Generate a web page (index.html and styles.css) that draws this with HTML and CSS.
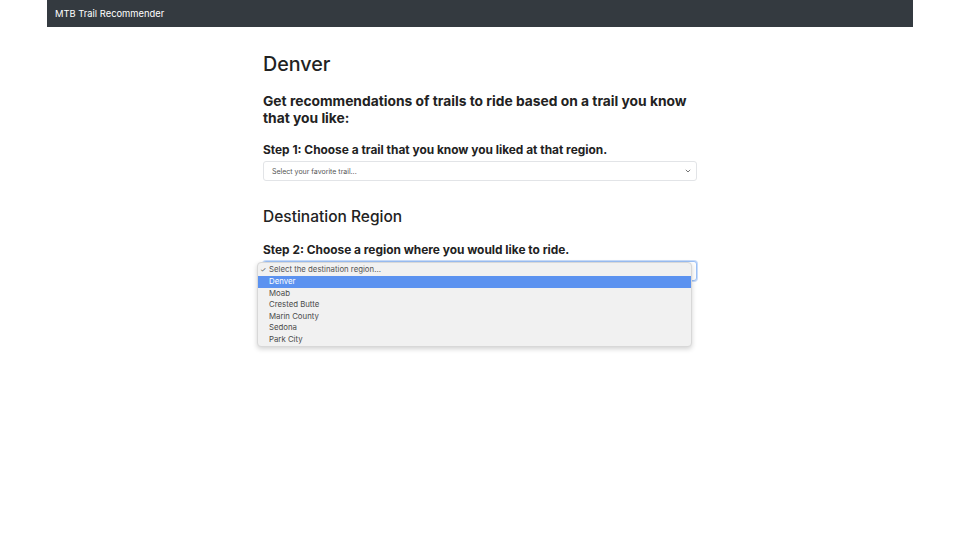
FILE: index.html
```html
<!DOCTYPE html>
<html>
<head>
<meta charset="utf-8">
<link rel="stylesheet" href="styles.css">
</head>
<body>
<div class="page">
  <nav class="navbar"><span class="brand">MTB Trail Recommender</span></nav>
  <main class="content">
    <h1 class="title">Denver</h1>
    <h2 class="lead">Get recommendations of trails to ride based on a trail you know that you like:</h2>
    <h3 class="step">Step 1: Choose a trail that you know you liked at that region.</h3>
    <div class="select">
      <span class="select-text">Select your favorite trail...</span>
      <svg class="chev" width="6" height="4" viewBox="0 0 6 4"><path d="M0.8 0.8 L3 3 L5.2 0.8" fill="none" stroke="#666" stroke-width="0.9"/></svg>
    </div>
    <h2 class="subtitle">Destination Region</h2>
    <h3 class="step">Step 2: Choose a region where you would like to ride.</h3>
    <div class="select-wrap">
      <div class="select select-focus">
        <span class="select-text"></span>
        <svg class="chev" width="6" height="4" viewBox="0 0 6 4"><path d="M0.8 0.8 L3 3 L5.2 0.8" fill="none" stroke="#666" stroke-width="0.9"/></svg>
      </div>
      <div class="menu">
        <div class="opt opt-head"><span class="check">✓</span>Select the destination region...</div>
        <div class="opt opt-active">Denver</div>
        <div class="opt">Moab</div>
        <div class="opt">Crested Butte</div>
        <div class="opt">Marin County</div>
        <div class="opt">Sedona</div>
        <div class="opt">Park City</div>
      </div>
    </div>
  </main>
</div>
</body>
</html>
```
FILE: styles.css
```css
html, body {
  margin: 0;
  padding: 0;
  background: #fff;
}
body {
  font-family: Inter, "Liberation Sans", sans-serif;
  color: #212529;
  min-height: 540px;
}
.page {
  width: 866px;
  margin: 0 auto;
  min-height: 540px;
}
.navbar {
  height: 27px;
  background: #343a40;
  display: flex;
  align-items: center;
  padding-left: 8px;
}
.brand {
  color: #fff;
  font-size: 9.4px;
}
.content {
  width: 434px;
  margin: 0 auto;
  padding-top: 24px;
  padding-bottom: 120px;
}
.title {
  margin: 0;
  font-size: 19.7px;
  font-weight: 500;
  line-height: 26px;
  color: #222;
}
.lead {
  margin: 16px 0 0;
  font-size: 13.8px;
  font-weight: 700;
  line-height: 17px;
  color: #222;
}
.step {
  margin: 16px 0 0;
  font-size: 11.9px;
  font-weight: 700;
  line-height: 14px;
  color: #222;
}
.select {
  margin-top: 4px;
  height: 20px;
  box-sizing: border-box;
  border: 1px solid #e2e4e7;
  border-radius: 3px;
  display: flex;
  align-items: center;
  justify-content: space-between;
  padding: 0 5px 0 8px;
  background: #fff;
}
.select-text {
  font-size: 7px;
  color: #555;
}
.select-wrap {
  position: relative;
}
.select-focus {
  border-color: #9cc0f5;
  box-shadow: 0 0 0 1px #c8dcfa;
}
.subtitle {
  margin: 26px 0 0;
  font-size: 15.5px;
  font-weight: 500;
  line-height: 20px;
  color: #222;
}
.menu {
  position: absolute;
  left: -6px;
  top: 1px;
  width: 435px;
  height: 85px;
  background: #f1f1f1;
  border: 1px solid #d8d8d8;
  border-radius: 4px;
  box-shadow: 0 2px 5px rgba(0, 0, 0, 0.18);
  box-sizing: border-box;
}
.opt {
  height: 11.5px;
  line-height: 11.5px;
  font-size: 7.8px;
  color: #4a4a4a;
  padding-left: 11px;
  position: relative;
}
.opt-head {
  height: 13px;
  line-height: 13px;
  color: #555;
}
.check {
  position: absolute;
  left: 2px;
  font-size: 7px;
}
.opt-active {
  background: #5b92f0;
  color: #fff;
}
```
